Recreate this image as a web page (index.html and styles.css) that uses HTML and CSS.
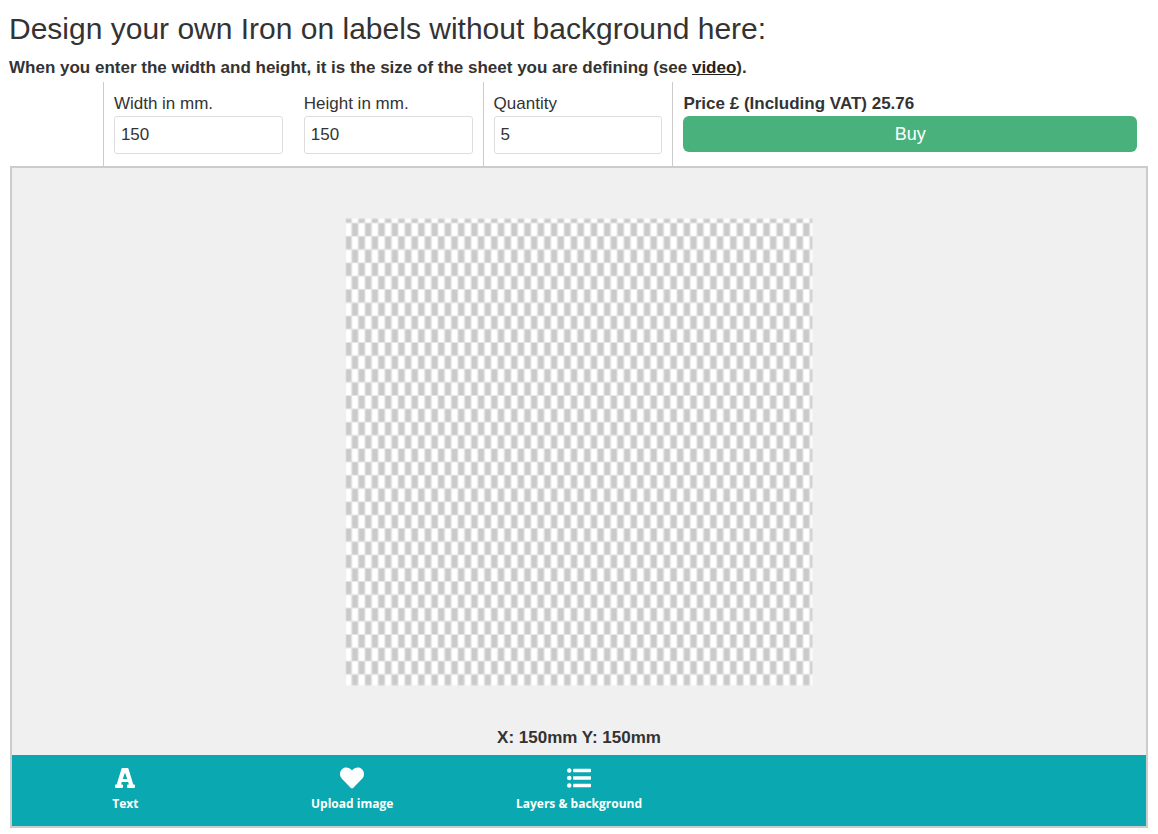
FILE: index.html
```html
<!DOCTYPE html>
<html lang="en">

<head>
  <meta charset="UTF-8" />
  <meta name="viewport" content="width=device-width, initial-scale=1.0" />
  <title>Iron on labels without background</title>
  <link rel="stylesheet" href="styles.css">
</head>

<body>
  <h1 class="page-title">Design your own Iron on labels without background here:</h1>
  <p class="intro">When you enter the width and height, it is the size of the sheet you are defining (see <a href="#video">video</a>).</p>

  <form class="order-form" id="orderForm">
    <div class="spacer"></div>
    <div class="field field-line">
      <label for="widthInput">Width in mm.</label>
      <input type="text" id="widthInput" value="150" />
    </div>
    <div class="field">
      <label for="heightInput">Height in mm.</label>
      <input type="text" id="heightInput" value="150" />
    </div>
    <div class="field field-line">
      <label for="quantityInput">Quantity</label>
      <input type="text" id="quantityInput" value="5" />
    </div>
    <div class="field field-line field-price">
      <div class="price">Price £ (Including VAT) 25.76</div>
      <button type="button" class="buy-button">Buy</button>
    </div>
  </form>

  <main class="designer">
    <div class="stage">
      <!-- Transparent sheet -->
      <svg class="sheet" viewBox="0 0 141 141" role="img" aria-label="Sheet">
        <defs>
          <pattern id="checks" width="4" height="8" y="1.5" patternUnits="userSpaceOnUse">
            <rect width="4" height="8" fill="#fff" />
            <rect x="2" width="2" height="4" fill="#cacaca" />
            <rect y="4" width="2" height="4" fill="#cacaca" />
            <path d="M0 0H4M0 4H4M0 8H4M0 0V8M2 0V8M4 0V8" stroke="#e6e6e6" stroke-width="0.36" fill="none" />
          </pattern>
        </defs>
        <rect width="141" height="141" fill="url(#checks)" />
        <rect width="141" height="141" fill="none" stroke="#f0f0f0" stroke-opacity="0.6" stroke-width="0.8" />
      </svg>
      <div class="dimensions">X: 150mm Y: 150mm</div>
    </div>

    <nav class="toolbar">
      <button type="button" class="tool">
        <svg viewBox="0 0 24 24" class="tool-icon" aria-hidden="true">
          <path fill-rule="evenodd" d="M9.500 2h5a1 1 0 0 1 1 .700L20.300 18.500H21a1 1 0 0 1 1 1V21a1 1 0 0 1-1 1h-6a1 1 0 0 1-1-1v-1.500a1 1 0 0 1 1-1h.900L15.200 16H8.800l-.700 2.500H9a1 1 0 0 1 1 1V21a1 1 0 0 1-1 1H3a1 1 0 0 1-1-1v-1.500a1 1 0 0 1 1-1h.700L8.500 2.700a1 1 0 0 1 1-.700zM12 6.500L9.800 13h4.400z" />
        </svg>
        <span>Text</span>
      </button>
      <button type="button" class="tool">
        <svg viewBox="0 0 512 512" class="tool-icon" aria-hidden="true">
          <path d="M462.300 62.600C407.500 15.900 326 24.300 275.700 76.200L256 96.500l-19.700-20.300C186.100 24.300 104.500 15.900 49.700 62.600c-62.800 53.600-66.100 149.800-9.900 207.900l193.500 199.800c12.500 12.900 32.800 12.900 45.300 0l193.500-199.800c56.300-58.100 53-154.300-9.800-207.900z" />
        </svg>
        <span>Upload image</span>
      </button>
      <button type="button" class="tool">
        <svg viewBox="0 0 512 512" class="tool-icon" aria-hidden="true">
          <circle cx="48" cy="96" r="48" />
          <circle cx="48" cy="256" r="48" />
          <circle cx="48" cy="416" r="48" />
          <rect x="128" y="60" width="384" height="72" rx="16" />
          <rect x="128" y="220" width="384" height="72" rx="16" />
          <rect x="128" y="380" width="384" height="72" rx="16" />
        </svg>
        <span>Layers &amp; background</span>
      </button>
    </nav>
  </main>
</body>

</html>
```
FILE: styles.css
```css
* {
  box-sizing: border-box;
}

body {
  margin: 0;
  font-family: "Liberation Sans", Arial, sans-serif;
  font-size: 17px;
  line-height: 24px;
  color: #333;
  background: #fff;
}

.page-title {
  margin: 0;
  padding: 11px 9px 9px;
  font-size: 30px;
  line-height: 36px;
  font-weight: 400;
}

.intro {
  margin: 0;
  padding: 0 9px 2px;
  font-weight: 700;
}

.intro a {
  color: #222;
}

.order-form {
  display: grid;
  grid-template-columns: repeat(12, 1fr);
  margin: 0 11px 0 8px;
}

.field {
  grid-column: span 2;
  padding: 10px 10px 12px;
  border-left: 1px solid transparent;
}

.field-line {
  border-left-color: #ccc;
}

.field-price {
  grid-column: span 5;
}

.field label,
.price {
  display: block;
}

.price {
  font-weight: 700;
}

.field input {
  display: block;
  width: 100%;
  height: 38px;
  padding: 0 6px;
  border: 1px solid #ddd;
  border-radius: 3px;
  font: inherit;
  color: #333;
  background: #fff;
}

.buy-button {
  display: block;
  width: 100%;
  height: 36px;
  border: none;
  border-radius: 6px;
  background: #49b27c;
  color: #fff;
  font-family: inherit;
  font-size: 18px;
  cursor: pointer;
}

.designer {
  margin: 0 10px;
  border: 2px solid #ccc;
}

.stage {
  display: flex;
  flex-direction: column;
  align-items: center;
  padding: 50px 0 5px;
  background: #f0f0f0;
}

.sheet {
  display: block;
  width: 468px;
  max-width: 100%;
  margin-bottom: 40px;
}

.dimensions {
  font-weight: 700;
}

.toolbar {
  display: grid;
  grid-template-columns: repeat(5, 1fr);
  background: #0aa8b0;
}

.tool {
  display: flex;
  flex-direction: column;
  align-items: center;
  padding: 11px 0 14px;
  border: none;
  background: none;
  color: #fff;
  font-family: "Open Sans", sans-serif;
  font-size: 12px;
  line-height: 16px;
  font-weight: 700;
  cursor: pointer;
}

.tool-icon {
  height: 24px;
  margin-bottom: 6px;
  fill: #fff;
}
```
